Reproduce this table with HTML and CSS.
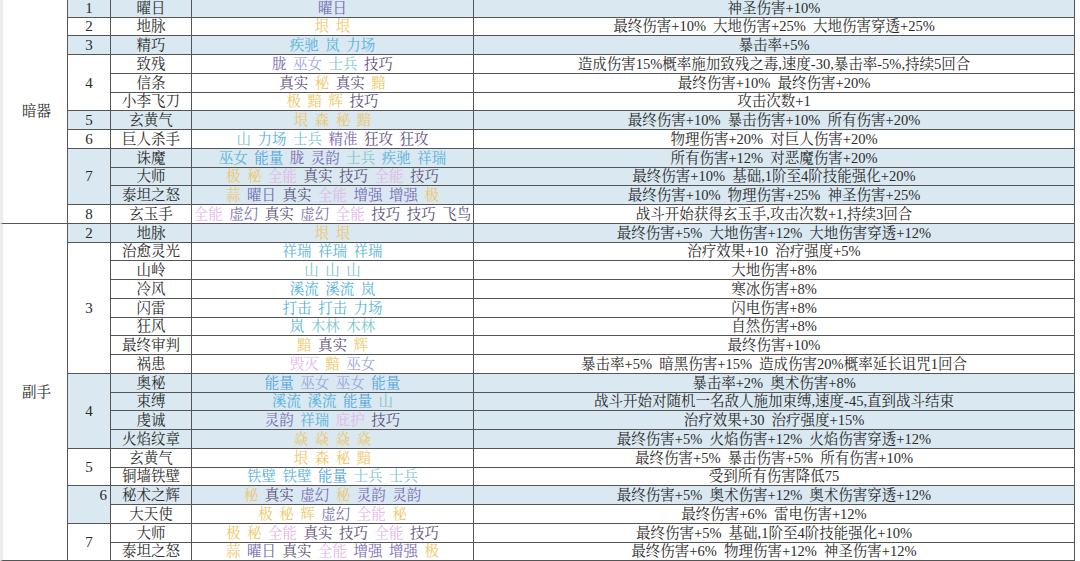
FILE: index.html
```html
<!DOCTYPE html>
<html lang="zh">
<head>
<meta charset="utf-8">
<title>符文组合表</title>
<link rel="stylesheet" href="styles.css">
</head>
<body>
<div class="sheet">
  <div class="c grp g12">暗器</div>

  <div class="c num hl">1</div><div class="c name hl">曜日</div>
  <div class="c runes hl"><span class="sun">曜日</span></div>
  <div class="c eff hl">神圣伤害+10%</div>

  <div class="c num">2</div><div class="c name">地脉</div>
  <div class="c runes"><span class="gold">垠</span> <span class="gold">垠</span></div>
  <div class="c eff">最终伤害+10% 大地伤害+25% 大地伤害穿透+25%</div>

  <div class="c num hl">3</div><div class="c name hl">精巧</div>
  <div class="c runes hl"><span class="sky">疾驰</span> <span class="sky">岚</span> <span class="sky">力场</span></div>
  <div class="c eff hl">暴击率+5%</div>

  <div class="c num r3">4</div><div class="c name">致残</div>
  <div class="c runes"><span class="pur">胧</span> <span class="lav">巫女</span> <span class="teal">士兵</span> <span class="dark">技巧</span></div>
  <div class="c eff">造成伤害15%概率施加致残之毒,速度-30,暴击率-5%,持续5回合</div>
  <div class="c name">信条</div>
  <div class="c runes"><span class="dark">真实</span> <span class="gold">秘</span> <span class="dark">真实</span> <span class="gold">黯</span></div>
  <div class="c eff">最终伤害+10% 最终伤害+20%</div>
  <div class="c name">小李飞刀</div>
  <div class="c runes"><span class="gold">极</span> <span class="gold">黯</span> <span class="gold">辉</span> <span class="dark">技巧</span></div>
  <div class="c eff">攻击次数+1</div>

  <div class="c num hl">5</div><div class="c name hl">玄黄气</div>
  <div class="c runes hl"><span class="gold">垠</span> <span class="gold">森</span> <span class="gold">秘</span> <span class="gold">黯</span></div>
  <div class="c eff hl">最终伤害+10% 暴击伤害+10% 所有伤害+20%</div>

  <div class="c num">6</div><div class="c name">巨人杀手</div>
  <div class="c runes"><span class="teal">山</span> <span class="sky">力场</span> <span class="teal">士兵</span> <span class="pur">精准</span> <span class="dark">狂攻</span> <span class="dark">狂攻</span></div>
  <div class="c eff">物理伤害+20% 对巨人伤害+20%</div>

  <div class="c num hl r3">7</div><div class="c name hl">诛魔</div>
  <div class="c runes hl"><span class="sky">巫女</span> <span class="blue">能量</span> <span class="pur">胧</span> <span class="pur">灵韵</span> <span class="teal">士兵</span> <span class="sky">疾驰</span> <span class="sky">祥瑞</span></div>
  <div class="c eff hl">所有伤害+12% 对恶魔伤害+20%</div>
  <div class="c name hl">大师</div>
  <div class="c runes hl"><span class="gold">极</span> <span class="gold">秘</span> <span class="pink">全能</span> <span class="dark">真实</span> <span class="dark">技巧</span> <span class="pink">全能</span> <span class="dark">技巧</span></div>
  <div class="c eff hl">最终伤害+10% 基础,1阶至4阶技能强化+20%</div>
  <div class="c name hl">泰坦之怒</div>
  <div class="c runes hl"><span class="gold">蒜</span> <span class="sun">曜日</span> <span class="dark">真实</span> <span class="pink">全能</span> <span class="pur">增强</span> <span class="pur">增强</span> <span class="gold">极</span></div>
  <div class="c eff hl">最终伤害+10% 物理伤害+25% 神圣伤害+25%</div>

  <div class="c num">8</div><div class="c name">玄玉手</div>
  <div class="c runes"><span class="pink">全能</span> <span class="pur">虚幻</span> <span class="dark">真实</span> <span class="pur">虚幻</span> <span class="pink">全能</span> <span class="dark">技巧</span> <span class="dark">技巧</span> <span class="dark">飞鸟</span></div>
  <div class="c eff">战斗开始获得玄玉手,攻击次数+1,持续3回合</div>

  <div class="c grp g18">副手</div>

  <div class="c num hl">2</div><div class="c name hl">地脉</div>
  <div class="c runes hl"><span class="gold">垠</span> <span class="gold">垠</span></div>
  <div class="c eff hl">最终伤害+5% 大地伤害+12% 大地伤害穿透+12%</div>

  <div class="c num r7">3</div><div class="c name">治愈灵光</div>
  <div class="c runes"><span class="sky">祥瑞</span> <span class="sky">祥瑞</span> <span class="sky">祥瑞</span></div>
  <div class="c eff">治疗效果+10 治疗强度+5%</div>
  <div class="c name">山岭</div>
  <div class="c runes"><span class="teal">山</span> <span class="teal">山</span> <span class="teal">山</span></div>
  <div class="c eff">大地伤害+8%</div>
  <div class="c name">冷风</div>
  <div class="c runes"><span class="sky">溪流</span> <span class="sky">溪流</span> <span class="sky">岚</span></div>
  <div class="c eff">寒冰伤害+8%</div>
  <div class="c name">闪雷</div>
  <div class="c runes"><span class="sky">打击</span> <span class="sky">打击</span> <span class="sky">力场</span></div>
  <div class="c eff">闪电伤害+8%</div>
  <div class="c name">狂风</div>
  <div class="c runes"><span class="sky">岚</span> <span class="teal">木林</span> <span class="teal">木林</span></div>
  <div class="c eff">自然伤害+8%</div>
  <div class="c name">最终审判</div>
  <div class="c runes"><span class="gold">黯</span> <span class="dark">真实</span> <span class="gold">辉</span></div>
  <div class="c eff">最终伤害+10%</div>
  <div class="c name">祸患</div>
  <div class="c runes"><span class="pink">毁灭</span> <span class="gold">黯</span> <span class="lav">巫女</span></div>
  <div class="c eff">暴击率+5% 暗黑伤害+15% 造成伤害20%概率延长诅咒1回合</div>

  <div class="c num hl r4">4</div><div class="c name hl">奥秘</div>
  <div class="c runes hl"><span class="blue">能量</span> <span class="lav">巫女</span> <span class="lav">巫女</span> <span class="blue">能量</span></div>
  <div class="c eff hl">暴击率+2% 奥术伤害+8%</div>
  <div class="c name hl">束缚</div>
  <div class="c runes hl"><span class="sky">溪流</span> <span class="sky">溪流</span> <span class="blue">能量</span> <span class="teal">山</span></div>
  <div class="c eff hl">战斗开始对随机一名敌人施加束缚,速度-45,直到战斗结束</div>
  <div class="c name hl">虔诚</div>
  <div class="c runes hl"><span class="pur">灵韵</span> <span class="sky">祥瑞</span> <span class="pink">庇护</span> <span class="dark">技巧</span></div>
  <div class="c eff hl">治疗效果+30 治疗强度+15%</div>
  <div class="c name hl">火焰纹章</div>
  <div class="c runes hl"><span class="gold">焱</span> <span class="gold">焱</span> <span class="gold">焱</span> <span class="gold">焱</span></div>
  <div class="c eff hl">最终伤害+5% 火焰伤害+12% 火焰伤害穿透+12%</div>

  <div class="c num r2">5</div><div class="c name">玄黄气</div>
  <div class="c runes"><span class="gold">垠</span> <span class="gold">森</span> <span class="gold">秘</span> <span class="gold">黯</span></div>
  <div class="c eff">最终伤害+5% 暴击伤害+5% 所有伤害+10%</div>
  <div class="c name">铜墙铁壁</div>
  <div class="c runes"><span class="sky">铁壁</span> <span class="sky">铁壁</span> <span class="blue">能量</span> <span class="teal">士兵</span> <span class="teal">士兵</span></div>
  <div class="c eff">受到所有伤害降低75</div>

  <div class="c num hl r2 topright">6</div><div class="c name hl">秘术之辉</div>
  <div class="c runes hl"><span class="gold">秘</span> <span class="dark">真实</span> <span class="pur">虚幻</span> <span class="gold">秘</span> <span class="pur">灵韵</span> <span class="pur">灵韵</span></div>
  <div class="c eff hl">最终伤害+5% 奥术伤害+12% 奥术伤害穿透+12%</div>
  <div class="c name">大天使</div>
  <div class="c runes"><span class="gold">极</span> <span class="gold">秘</span> <span class="gold">辉</span> <span class="pur">虚幻</span> <span class="pink">全能</span> <span class="gold">秘</span></div>
  <div class="c eff">最终伤害+6% 雷电伤害+12%</div>

  <div class="c num r2">7</div><div class="c name">大师</div>
  <div class="c runes"><span class="gold">极</span> <span class="gold">秘</span> <span class="pink">全能</span> <span class="dark">真实</span> <span class="dark">技巧</span> <span class="pink">全能</span> <span class="dark">技巧</span></div>
  <div class="c eff">最终伤害+5% 基础,1阶至4阶技能强化+10%</div>
  <div class="c name">泰坦之怒</div>
  <div class="c runes"><span class="gold">蒜</span> <span class="sun">曜日</span> <span class="dark">真实</span> <span class="pink">全能</span> <span class="pur">增强</span> <span class="pur">增强</span> <span class="gold">极</span></div>
  <div class="c eff">最终伤害+6% 物理伤害+12% 神圣伤害+12%</div>
</div>
</body>
</html>
```
FILE: styles.css
```css
* { box-sizing: border-box; }
html, body { margin: 0; padding: 0; background: #fff; overflow: hidden; }
body {
  width: 1080px;
  height: 561px;
  font-family: "Liberation Serif", "Noto Serif CJK SC", "Noto Sans CJK SC", serif;
  font-size: 14.5px;
  color: #2b2b2b;
}
.sheet {
  display: grid;
  grid-template-columns: 68px 43px 81px 282px 601px;
  grid-auto-rows: 18.75px;
  margin-top: -1.25px;
  width: 1075px;
}
.c {
  display: flex;
  align-items: center;
  justify-content: center;
  border-right: 1px solid #555;
  border-bottom: 1px solid #555;
  white-space: pre;
  line-height: 18px;
  overflow: hidden;
  background: #fff;
}
.hl { background: #d9e8f1; }
.grp { grid-column: 1; border-left: 3px solid #ececec; padding-left: 3px; }
.num { grid-column: 2; font-size: 15px; }
.name { grid-column: 3; }
.runes { grid-column: 4; gap: 6.5px; }
.eff { grid-column: 5; word-spacing: 3.5px; }
.g12 { grid-row: span 12; }
.g18 { grid-row: span 18; }
.r2 { grid-row: span 2; }
.r3 { grid-row: span 3; }
.r4 { grid-row: span 4; }
.r7 { grid-row: span 7; }
.topright { align-items: flex-start; justify-content: flex-end; padding-right: 3px; }
.sun { color: #7068b0; }
.gold { color: #eec766; }
.sky { color: #55b2da; }
.blue { color: #4fa3e0; }
.teal { color: #7ec6cc; }
.pur { color: #7a6cb4; }
.lav { color: #9aa4dc; }
.dark { color: #5a4e78; }
.pink { color: #e3b6e6; }
```
